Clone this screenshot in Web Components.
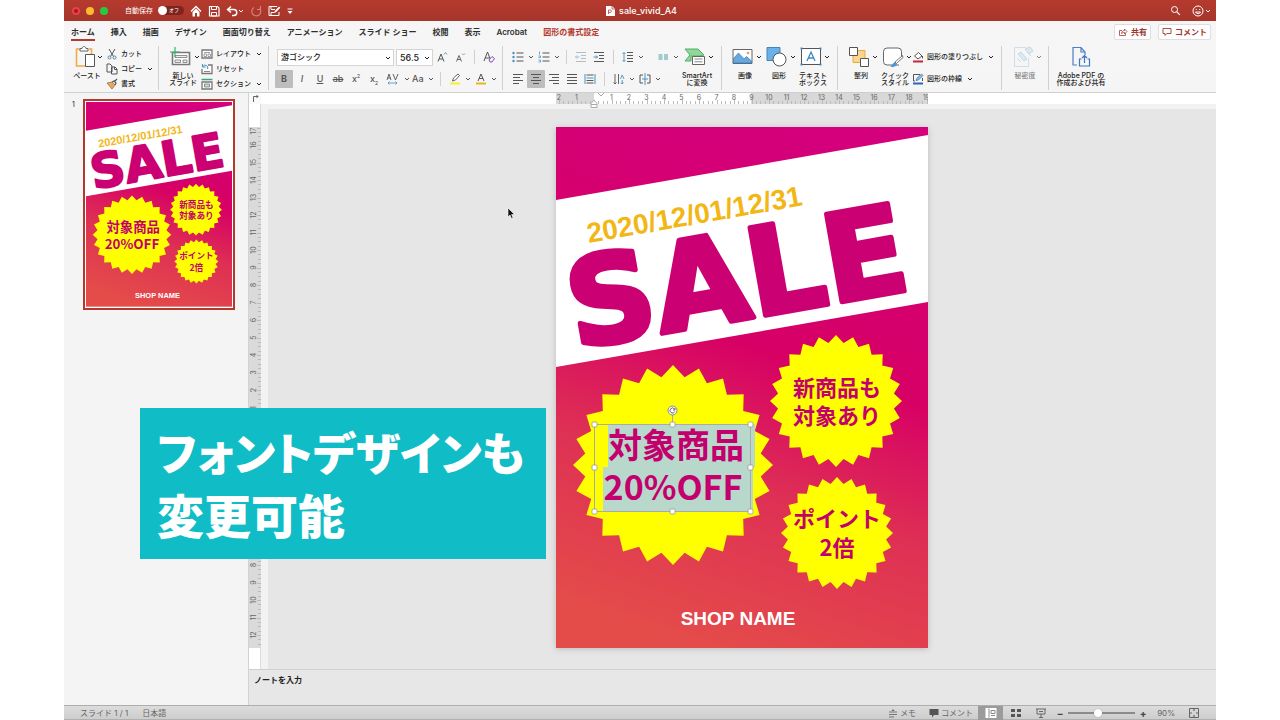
<!DOCTYPE html>
<html lang="ja">
<head>
<meta charset="utf-8">
<title>sale_vivid_A4</title>
<style>
html,body{margin:0;height:100%;background:#fff}
body{font-family:Inter,"Noto Sans CJK JP",sans-serif;font-size:7px;color:#222;overflow:hidden}
</style>
</head>
<body>
<office-window></office-window>
<script>
const RESET = `*{box-sizing:border-box}
button,select,input{font:inherit;color:inherit;margin:0;padding:0;border:0;background:none}
svg{display:block}`;
const define = (name, css, html, setup) => customElements.define(name, class extends HTMLElement {
  constructor() {
    super();
    this.attachShadow({mode: 'open'});
  }
  connectedCallback() {
    const body = typeof html === 'function' ? html(this) : html;
    this.shadowRoot.innerHTML = `<style>${RESET}${css}</style>${body}`;
    if (setup) setup(this, this.shadowRoot);
  }
});

/* ---------- icons: [width, height, markup] ---------- */
const lines = (rows, c = '#555') => rows.map(([x, y, w]) => `<path d="M${x} ${y}h${w}" stroke="${c}"/>`).join('');
const ICONS = {
  home: [12,12,'<path d="M1 6.5 6 1.5l5 5" fill="none" stroke="#fff" stroke-width="1.4"/><path d="M2.500 7 6 3.600 9.500 7v4.500H7V8H5v3.500H2.500z" fill="#fff"/>'],
  save: [12,12,'<path d="M1.500 1.500h8l1.500 1.500v8h-9.500z" fill="none" stroke="#fff" stroke-width="1.200"/><path d="M3.500 1.500h5v3h-5zM3.500 7.500h5v3.500h-5z" fill="none" stroke="#fff"/>'],
  undo: [12,12,'<path d="M5 1.500 1.500 4.500 5 7.500M1.500 4.500h6a3 3 0 0 1 .5 6H6" fill="none" stroke="#fff" stroke-width="1.400"/>'],
  redo: [12,12,'<path d="M9.800 3.500A4.500 4.500 0 1 1 4 2.500M7 4.500h3.500V1" fill="none" stroke="#d8837b" stroke-width="1.100"/>'],
  edit: [13,12,'<path d="M11 7v3.500H1v-9h8M3 1.500v3h4M3 10.500v-3h3" fill="none" stroke="#fff"/><path d="m6 8 .7-2L11 1.500l1.300 1.300L8 7.300z" fill="#fff"/>'],
  more: [6,8,'<path d="M.5 2h5" stroke="#fff"/><path d="M.5 4h5L3 7z" fill="#fff"/>'],
  file: [9,10,'<path d="M0 0h6l3 3v7H0z" fill="#fff"/><path d="M6 0v3h3M2.500 8V4h1.700a1.200 1.200 0 0 1 0 2.500H2.500" fill="none" stroke="#c0685f"/>'],
  search: [11,11,'<circle cx="4.500" cy="4.500" r="3" fill="none" stroke="#fff"/><path d="m6.800 6.800 3 3" stroke="#fff" stroke-width="1.200"/>'],
  smile: [12,12,'<circle cx="6" cy="6" r="5" fill="none" stroke="#fff"/><path d="M4.300 4v1M7.700 4v1M3.500 7a2.700 2.700 0 0 0 5 0z" fill="none" stroke="#fff"/>'],
  share: [10,10,'<path d="M4 3.500H1.500v5h6V6.500M3.500 6.500c.3-2 1.500-3 3-3V2l2.500 2.500L6.500 7V5.500c-1.500 0-2.300.3-3 1z" fill="none" stroke="#a33b32" stroke-width=".8"/>'],
  bubble: [10,10,'<path d="M1 1.500h8v5H4.800L3 8.500v-2H1z" fill="none" stroke="#a33b32" stroke-width=".9"/>'],
  paste: [20,22,'<path d="M5 3H1.500v17H10M14 3h2.500v5" fill="none" stroke="#f0ac45" stroke-width="1.600"/><path d="M5 5V2.500h2C7.300 1 8 .6 9 .6s1.700.4 2 1.900h2V5z" fill="#fff" stroke="#666"/><path d="M10.500 8.500h9v12h-9z" fill="#fff" stroke="#555"/>'],
  cut: [12,12,'<path d="m3 1 4.500 7.500M9 1 4.500 8.500" stroke="#555"/><circle cx="3.500" cy="9.500" r="1.500" fill="none" stroke="#58a"/><circle cx="8.500" cy="9.500" r="1.500" fill="none" stroke="#58a"/>'],
  copy: [12,12,'<path d="M1 1h3l2 2v6H1zM5.500 4h3.500l2 2v5h-5.500z" fill="#f7f7f7" stroke="#555"/><path d="M8.500 4v2.500H11" fill="none" stroke="#555"/>'],
  brush: [12,12,'<path d="m1 5 5-1 3 3-3 4z" fill="#f2a654" stroke="#8a6a4a" stroke-width=".7"/><path d="m6 4 2-1 2 2-1 2M8.500 3.500 11 1" fill="none" stroke="#555" stroke-width="1.200"/>'],
  newslide: [22,20,'<path d="M2.500 5.500h17v12h-17z" fill="#fff" stroke="#777" stroke-width="1.600"/><path d="M5 8.500h12v2H5zM5 13h5.500v2.500H5zM13 13h4v2.500h-4z" fill="#eee" stroke="#777" stroke-width=".8"/><path d="M5 0v10M0 5h10" stroke="#35b46a" stroke-width="1.200"/>'],
  layout: [12,12,'<path d="M1 2h10v8H1z" fill="#fff" stroke="#777" stroke-width="1.300"/><path d="M3 4.500h6M3 8.500V6h2.500v2.500zM7 8.500V6h2.500v2.500z" fill="none" stroke="#888" stroke-width=".8"/>'],
  reset: [12,12,'<path d="M1 2h10v8.500H1z" fill="#fff" stroke="#777" stroke-width="1.300"/><path d="M3 8.500h6" stroke="#888"/><path d="M0 1h7v5H0z" fill="#f4f4f4"/><path d="M6.500 6A2.500 2.500 0 0 0 2 3.500M1.500 1v3h3" fill="none" stroke="#4a92bf"/>'],
  section: [12,12,'<path d="M.5 1.500h11" stroke="#3aa873" stroke-width="1.500"/><path d="M1 4h10v7H1z" fill="#fff" stroke="#777" stroke-width="1.300"/><path d="M3.500 6h5v3h-5z" fill="#bde3cf" stroke="#777" stroke-width=".8"/>'],
  grow: [12,12,'<path d="M2 10.500 5 3l3 7.500M3 8h4" fill="none" stroke="#555"/><path d="m8 3.500 1.500-2 1.500 2" fill="none" stroke="#4a92bf" stroke-width=".8"/>'],
  shrink: [12,12,'<path d="M2.500 10.500 5 4.500l2.500 6M3.300 8.500h3.400" fill="none" stroke="#555" stroke-width=".9"/><path d="M8 2.500 9.500 4 11 2.500" fill="none" stroke="#4a92bf" stroke-width=".8"/>'],
  clear: [12,12,'<path d="M1 10 4.500 1 8 10M2.300 7h4" fill="none" stroke="#555"/><path d="m6 9 3-3.500 2.500 2L9 11H7z" fill="#f4eefa" stroke="#8f4fb5"/>'],
  spacing: [14,12,'<path d="m1 7 2-6 2 6M1.700 5h2.700M7 1l2.500 6L12 1" fill="none" stroke="#555" stroke-width=".9"/><path d="M2 10h9M3.500 8.500 2 10l1.500 1.500M9.500 8.500 11 10l-1.500 1.500" fill="none" stroke="#4a92bf" stroke-width=".8"/>'],
  marker: [12,12,'<path d="M1 9.500h10v2H1z" fill="#f8ee2c"/><path d="m3.500 8 1-3L9 1l1.500 1.500L6.500 7z" fill="#fff" stroke="#555" stroke-width=".9"/>'],
  fontcolor: [12,12,'<path d="M1 9.500h10v2H1z" fill="#f0b323"/><path d="m3 8 3-7 3 7M4 5.500h4" fill="none" stroke="#555"/>'],
  bullets: [12,12,'<g fill="#4a92bf"><circle cx="1.500" cy="2" r="1.200"/><circle cx="1.500" cy="6" r="1.200"/><circle cx="1.500" cy="10" r="1.200"/></g>'+lines([[4.5,2,7],[4.5,6,7],[4.5,10,7]])],
  numbers: [12,12,'<path d="M1.500.5v3M.5 5h2v1.500h-2M.5 9h2v2h-2" fill="none" stroke="#4a92bf" stroke-width=".8"/>'+lines([[4.5,2,7],[4.5,6,7],[4.5,10,7]])],
  outdent: [12,12,lines([[1,1.5,10],[6,4.5,5],[6,7.5,5],[1,10.500,10]],'#b5bcc4')+'<path d="M4.500 6h-4M2 4.500.5 6 2 7.500" fill="none" stroke="#9cc0dd"/>'],
  indent: [12,12,lines([[1,1.5,10],[6,4.5,5],[6,7.5,5],[1,10.500,10]])+'<path d="M.5 6h4M3 4.500 4.500 6 3 7.500" fill="none" stroke="#4a92bf"/>'],
  linesp: [12,12,lines([[5,1.5,6],[5,4.5,6],[5,7.5,6],[5,10.500,6]])+'<path d="M2 1.500v9M.5 3 2 1.500 3.500 3M.5 9 2 10.500 3.500 9" fill="none" stroke="#4a92bf" stroke-width=".9"/>'],
  columns: [12,12,lines([[1.5,4,4],[1.5,6,4],[1.5,8,4],[7,4,4],[7,6,4],[7,8,4]],'#4fa0a8')],
  left: [12,12,lines([[1,1.5,10],[1,4.500,7],[1,7.5,10],[1,10.500,6]])],
  center: [12,12,lines([[1,1.500,10],[3,4.500,6],[1,7.500,10],[3,10.500,6]])],
  right: [12,12,lines([[1,1.500,10],[4,4.500,7],[1,7.500,10],[5,10.500,6]])],
  justify: [12,12,lines([[1,1.500,10],[1,4.500,10],[1,7.500,10],[1,10.500,10]])],
  distribute: [12,12,'<path d="M1 1v10M11 1v10" stroke="#4a92bf"/>'+lines([[2.500,2,7],[2.500,10,7],[2.500,7.500,7]])+'<path d="M2.500 5h7" stroke="#4a92bf"/>'],
  textdir: [12,12,'<path d="M2 1v10M.5 9.500 2 11l1.500-1.500M5.500 1v10" fill="none" stroke="#555" stroke-width=".9"/><path d="m7.500 6 1.700-4L11 6M9.200 7v4M8 9.500 9.200 11l1.300-1.500" fill="none" stroke="#4a92bf" stroke-width=".9"/>'],
  aligntext: [12,12,'<path d="M4 2H1v8h3M8 2h3v8H8" fill="none" stroke="#555"/><path d="M6 0v12M3 6h6" stroke="#4a92bf"/>'],
  smartart: [22,20,'<path d="M1 2h13l6 6-4 1H7v5H1l5-6z" fill="#8fd79b" stroke="#55ad6a"/><path d="M8.500 9.500h12v8h-12z" fill="#fff" stroke="#666"/><path d="M10.500 12h8M10.500 14.800h8" stroke="#888"/>'],
  picture: [22,20,'<path d="M1 2.500h19v14H1z" fill="#fff" stroke="#666"/><path d="m1.500 11.500 5-5.500 5.500 6 2.500-2.500 5 4.500v2h-18z" fill="#64a9e0" stroke="#3677b0" stroke-width=".7"/><circle cx="16" cy="6" r="1.300" fill="#ea9a6a"/>'],
  shapes: [22,20,'<path d="M1 .5h13v13H1z" fill="#6bb0e6" stroke="#4285bb"/><circle cx="13.500" cy="12.500" r="6.500" fill="#fff" stroke="#555"/>'],
  textbox: [22,20,'<path d="M1.500 1.500h19v16h-19z" fill="#fff" stroke="#555"/><path d="m7 14 4-9 4 9M8.500 11h5" fill="none" stroke="#3a8bc4" stroke-width="1.300"/><path d="M.5.5h2v2h-2zM19.500.5h2v2h-2zM.5 16.500h2v2h-2zM19.500 16.500h2v2h-2z" fill="#3a8bc4"/>'],
  arrange: [22,20,'<path d="M5 3.500h12v12H5z" fill="#fcd68c" stroke="#e3aa4c"/><path d="M1.500.5h8v8h-8zM12.500 11.500h8v8h-8z" fill="#fff" stroke="#555"/>'],
  quick: [22,20,'<path d="M17 18H5a3.500 3.500 0 0 1-3.500-3.500v-10A3.500 3.500 0 0 1 5 1h11a3.500 3.500 0 0 1 3.500 3.500V10" fill="#fff" stroke="#666"/><path d="M20.500 8.500 13 15l1.500 1.500 6.500-6z" fill="#fff" stroke="#555" stroke-width=".8"/><path d="M8 20c2-.5 2-4 5-5l2 1.500c0 2-2 4-7 3.500z" fill="#4a97d8"/>'],
  fill: [12,12,'<path d="m2.500 5 4-3.500L10 5 6 8z" fill="#fff" stroke="#555"/><path d="M1 9.500h10v2H1z" fill="#c4283c"/><path d="M10.500 5v2.500" stroke="#555"/>'],
  outline: [12,12,'<path d="M8 1.500H1.500V8H3M10.500 5v3" fill="none" stroke="#555"/><path d="m4 7.500 1-2.500L9.500 1 11 2.500 6.500 7z" fill="#8bbce8" stroke="#3c6ea8" stroke-width=".7"/><path d="M1 9.500h10v2H1z" fill="#3463b5"/>'],
  secret: [22,22,'<path d="M14 1.500H2.500v19h14V12" fill="none" stroke="#a9cfe0"/><path d="m6 8 3-2 6 7-3 2zM13 3l5-2 3 4-4 3z" fill="#c5dfec" stroke="#8cb9d0" stroke-width=".8"/><path d="m5 12 4 4M15 6l4 4" stroke="#9cc5d8"/>'],
  pdf: [20,22,'<path d="M6 19H2V1.500h8L14 6v3M10 1.500V6h4" fill="none" stroke="#4a7fc8" stroke-width="1.200"/><path d="M10.500 13h-2v7h10v-7h-2M13.500 17V9.500M11 12l2.500-2.500L16 12" fill="none" stroke="#3f77c4" stroke-width="1.200"/>'],
  memo: [10,10,'<path d="M3.500 3 5 1l1.500 2z" fill="#666"/><path d="M1 4h8M1 6.500h8M1 9h5" stroke="#777"/>'],
  bubblefill: [10,10,'<path d="M.5 1h9v6H5L3 9.500V7H.5z" fill="#555"/>'],
  normal: [12,12,'<path d="M.5 1h11v10H.5z" fill="#fff"/><path d="M4 1.500v9M6 3.500h4v3H6zM6 8.500h4" fill="none" stroke="#888"/>'],
  sorter: [12,12,'<path d="M1 2h4v3H1zM7 2h4v3H7zM1 7h4v3H1zM7 7h4v3H7z" fill="#555"/>'],
  show: [12,12,'<path d="M1 2h10M2 2v5h8V2M6 7v3M4 10.500h4M4 4.500h4" fill="none" stroke="#666"/>'],
  fit: [12,12,'<path d="M1.500 1.500h9v9h-9z" fill="none" stroke="#666"/><path d="M6 1v3M6 8v3M1 6h3M8 6h3" stroke="#666" stroke-width="1.200"/>'],
  tabstop: [7,8,'<path d="M1.500 8V2.500H6M4.500 1 6 2.500 4.500 4" fill="none" stroke="#555" stroke-width=".9"/>'],
  chev: [6,6,'<path d="m1 2 2 2 2-2" fill="none" stroke="currentColor"/>'],
};
define('app-icon', ':host{display:block;flex:none}', el => {
  const [w, h, m] = ICONS[el.getAttribute('name')];
  return `<svg width="${w}" height="${h}" viewBox="0 0 ${w} ${h}" aria-hidden="true">${m}</svg>`;
});

/* ---------- small reusable controls ---------- */
define('icon-button', `:host{display:flex;flex:none}
button{display:flex;align-items:center;width:18px;height:18px;justify-content:center;font-size:9px;line-height:18px;color:#555}
:host([menu]) button{width:26px;justify-content:flex-start;gap:4px;padding-left:3px}
:host([on]) button{background:#bdbdbd;border-radius:1px}`,
  el => `<button aria-label="${el.title}"><slot></slot>${el.hasAttribute('menu') ? '<app-icon name="chev"></app-icon>' : ''}</button>`);
define('big-button', `:host{display:block;flex:none}
button{display:grid;justify-items:center;align-content:start;grid-template-rows:24px auto;width:var(--w,34px);line-height:7px;white-space:nowrap}
.top{display:flex;align-items:center;gap:2px;height:22px}
.top.menu{margin-left:4px}
.label{padding-top:2px}`,
  el => `<button><span class="top ${el.hasAttribute('menu') ? 'menu' : ''}"><app-icon name="${el.getAttribute('icon')}"></app-icon>${el.hasAttribute('menu') ? '<app-icon name="chev"></app-icon>' : ''}</span><span class="label"><slot></slot></span></button>`);
define('small-button', `:host{display:block}
button{display:flex;align-items:center;gap:3px;height:12px;line-height:12px;white-space:nowrap}
app-icon:last-child{margin-left:2px}`,
  el => `<button><app-icon name="${el.getAttribute('icon')}"></app-icon><span><slot></slot></span>${el.hasAttribute('menu') ? '<app-icon name="chev"></app-icon>' : ''}</button>`);
define('ribbon-group', `:host{display:flex;flex:none;height:44px;border-right:1px solid #d0d0d0;padding-left:6px}
:host(:last-of-type){border:0}`, '<slot></slot>');
define('drop-list', `:host{display:flex;position:relative;height:17px;background:#fff;border:1px solid #d4d4d4}
select{appearance:none;width:100%;padding:0 3px;line-height:15px;border-radius:0}
app-icon{position:absolute;right:2px;top:5px;pointer-events:none}`,
  el => `<select aria-label="${el.title}"><option>${el.getAttribute('value')}</option></select><app-icon name="chev"></app-icon>`);

/* ---------- title bar ---------- */
define('title-bar', `:host{display:grid;grid-template-columns:1fr auto 1fr;align-items:center;height:21px;background:linear-gradient(#b63a2e,#a5352b);color:#fff;padding:0 5px 0 8px}
.left,.right,.title{display:flex;align-items:center}
.dots{display:flex;gap:6px;margin-right:17px}
.dots i{width:8px;height:8px;border-radius:50%;background:#fdbb2e}
.dots i:first-child{background:#a01820;border:2px solid #ec3f4a}
.dots i:last-child{background:#27c93f}
label{display:flex;align-items:center;gap:5px;line-height:12px}
.switch{position:relative;width:26px;height:9px;border-radius:5px;background:#7d241d;font-size:5px;line-height:9px;padding-left:11px;white-space:nowrap}
.switch input{appearance:none;position:absolute;left:0;top:0;width:9px;height:9px;border-radius:50%;background:#fff}
.tools{display:flex;align-items:center;gap:6px;margin-left:6px}
.tools button{display:flex;align-items:center}
.title{gap:4px;font-size:9px;line-height:12px;font-weight:500;margin:0}
.right{justify-content:flex-end;gap:11px}
.right button{display:flex;align-items:center;gap:1px}`,
`<div class="left"><span class="dots"><i></i><i></i><i></i></span>
<label>自動保存<span class="switch"><input type="checkbox" aria-label="自動保存">オフ</span></label>
<div class="tools"><button aria-label="ホーム"><app-icon name="home"></app-icon></button><button aria-label="保存"><app-icon name="save"></app-icon></button><button aria-label="元に戻す"><app-icon name="undo"></app-icon><app-icon name="chev"></app-icon></button><button aria-label="やり直し"><app-icon name="redo"></app-icon></button><button aria-label="編集"><app-icon name="edit"></app-icon></button><button aria-label="その他"><app-icon name="more"></app-icon></button></div></div>
<h1 class="title"><app-icon name="file"></app-icon>sale_vivid_A4</h1>
<div class="right"><button aria-label="検索"><app-icon name="search"></app-icon></button><button aria-label="フィードバック"><app-icon name="smile"></app-icon><app-icon name="chev"></app-icon></button></div>`);

/* ---------- tabs ---------- */
define('tab-strip', `:host{display:flex;align-items:center;justify-content:space-between;height:22px;padding:0 5px 0 7px;font-size:8px;line-height:12px;font-weight:600}
nav{display:flex;gap:16px}
a{color:#2e2e2e;text-decoration:none;padding:2px 0 1px;border-bottom:2px solid transparent;white-space:nowrap}
a.on{border-color:#b23a2e}a.fmt{color:#b5392f}
.actions{display:flex;gap:7px}
button{display:flex;align-items:center;gap:3px;height:16px;padding:0 3px;background:#fff;border:1px solid #dedede;border-radius:2px;color:#a0352b;white-space:nowrap}`,
`<nav><a class="on" href="#">ホーム</a><a href="#">挿入</a><a href="#">描画</a><a href="#">デザイン</a><a href="#">画面切り替え</a><a href="#">アニメーション</a><a href="#">スライド ショー</a><a href="#">校閲</a><a href="#">表示</a><a href="#">Acrobat</a><a class="fmt" href="#">図形の書式設定</a></nav>
<div class="actions"><button><app-icon name="share"></app-icon>共有</button><button><app-icon name="bubble"></app-icon>コメント</button></div>`);

/* ---------- ribbon ---------- */
const ib = (icon, title, attrs = '') => `<icon-button title="${title}" ${attrs}><app-icon name="${icon}"></app-icon></icon-button>`;
define('ribbon-bar', `:host{display:flex;height:50px;padding-top:3px;border-bottom:1px solid #cfcfcf;font-weight:500}
.col{display:grid;grid-template-rows:repeat(3,15px);align-items:center;align-content:start}
.clip .col{padding-left:2px}
.rows{display:grid;grid-template-rows:18px 18px;gap:4px;align-content:start;padding-top:2px}
.row{display:flex;align-items:center}
.sep{width:1px;height:14px;background:#d0d0d0;margin:0 5px}
.space{width:9px}
.clip{width:95px}.slides{width:110px}.font{width:234px}.para{width:219px}.insert{width:116px}.style{width:164px}.secret{width:47px}
.slides big-button{--w:36px}
.font{font-size:8px}.font drop-list:first-child{width:117px;margin:0 2px}.font drop-list:nth-child(2){width:37px;font-size:9px}
.two{display:grid;grid-template-rows:18px 18px;gap:4px;padding-top:2px;align-items:center}
.faded{opacity:.55}
.adobe big-button{--w:52px}
b,i,u,s{font-size:9px}sup,sub{font-size:5px;line-height:0}`,
`<ribbon-group class="clip"><big-button icon="paste" menu>ペースト</big-button><div class="col"><small-button icon="cut">カット</small-button><small-button icon="copy" menu>コピー</small-button><small-button icon="brush">書式</small-button></div></ribbon-group>
<ribbon-group class="slides"><big-button icon="newslide" menu>新しい<br>スライド</big-button><div class="col"><small-button icon="layout" menu>レイアウト</small-button><small-button icon="reset">リセット</small-button><small-button icon="section" menu>セクション</small-button></div></ribbon-group>
<ribbon-group class="font"><div class="rows">
<div class="row"><drop-list title="フォント" value="游ゴシック"></drop-list><drop-list title="サイズ" value="56.5"></drop-list>${ib('grow','拡大')}${ib('shrink','縮小')}<span class="sep"></span>${ib('clear','書式のクリア')}</div>
<div class="row"><icon-button title="太字" on><b>B</b></icon-button><icon-button title="斜体"><i>I</i></icon-button><icon-button title="下線"><u>U</u></icon-button><icon-button title="取り消し線"><s>ab</s></icon-button><icon-button title="上付き"><span>x<sup>2</sup></span></icon-button><icon-button title="下付き"><span>x<sub>2</sub></span></icon-button>${ib('spacing','文字の間隔','menu')}<icon-button title="大文字/小文字" menu>Aa</icon-button><span class="sep"></span>${ib('marker','蛍光ペン','menu')}${ib('fontcolor','フォントの色','menu')}</div></div></ribbon-group>
<ribbon-group class="para"><div class="rows">
<div class="row">${ib('bullets','箇条書き','menu')}${ib('numbers','段落番号','menu')}<span class="sep"></span>${ib('outdent','インデント解除')}${ib('indent','インデント')}<span class="sep"></span>${ib('linesp','行間','menu')}<span class="space"></span>${ib('columns','段組み','menu')}</div>
<div class="row">${ib('left','左揃え')}${ib('center','中央揃え','on')}${ib('right','右揃え')}${ib('justify','両端揃え')}${ib('distribute','均等割り付け')}<span class="sep"></span>${ib('textdir','文字列の方向','menu')}${ib('aligntext','文字の配置','menu')}</div></div><big-button icon="smartart" menu>SmartArt<br>に変換</big-button></ribbon-group>
<ribbon-group class="insert"><big-button icon="picture" menu>画像</big-button><big-button icon="shapes" menu>図形</big-button><big-button icon="textbox" menu>テキスト<br>ボックス</big-button></ribbon-group>
<ribbon-group class="style"><big-button icon="arrange" menu>整列</big-button><big-button icon="quick" menu>クイック<br>スタイル</big-button><div class="two"><small-button icon="fill" menu>図形の塗りつぶし</small-button><small-button icon="outline" menu>図形の枠線</small-button></div></ribbon-group>
<ribbon-group class="secret"><big-button class="faded" icon="secret" menu>秘密度</big-button></ribbon-group>
<ribbon-group class="adobe"><big-button icon="pdf">Adobe PDF の<br>作成および共有</big-button></ribbon-group>`);

/* ---------- the flyer ---------- */
const burst = (cx, cy, r, n = 24, k = .885) => {
  const p = [];
  for (let i = 0; i < n * 2; i++) {
    const a = Math.PI * i / n, q = i % 2 ? r * k : r;
    p.push((cx + q * Math.sin(a)).toFixed(1) + ',' + (cy - q * Math.cos(a)).toFixed(1));
  }
  return `<polygon points="${p.join(' ')}" fill="#ff0"/>`;
};
const handle = (x, y) => `<rect x="${x - 2}" y="${y - 2}" width="5" height="5" rx="1" fill="#fff" stroke="#999" stroke-width=".8"/>`;
define('sale-flyer', ':host{display:block}svg{width:100%;height:auto}text{text-anchor:middle}', el => {
  const sel = el.hasAttribute('editing');
  return `<svg viewBox="0 0 372 521" role="img" aria-label="SALE">
<defs><linearGradient id="bg" x1=".62" y1="0" x2=".38" y2="1"><stop offset="0" stop-color="#d4007c"/><stop offset=".42" stop-color="#d70065"/><stop offset=".68" stop-color="#de3054"/><stop offset="1" stop-color="#e44c49"/></linearGradient></defs>
<rect width="372" height="521" fill="url(#bg)"/>
<path d="M0 73 372 8v167L0 240z" fill="#fff"/>
<g font-family="Liberation Sans" font-weight="700">
<text transform="translate(140 97) rotate(-10)" font-size="28" fill="#f2b714">2020/12/01/12/31</text>
<text transform="translate(188 192) rotate(-10)" font-family="DejaVu Sans" font-size="122" fill="#cb0073" stroke="#cb0073" stroke-width="5" stroke-linejoin="round">SALE</text>
<text x="182" y="498" font-size="19" fill="#fff">SHOP NAME</text></g>
${burst(117, 338, 100)}${burst(280, 274, 66)}${burst(281, 406, 56)}
${sel ? '<path d="M52 297h147v43h-2v44H47v-44h5z" fill="#b9d8cc"/>' : ''}
<g font-family="Noto Sans CJK JP" font-weight="700" fill="#c3006e">
<text x="120" y="331" font-size="34">対象商品</text><text x="117" y="373" font-size="34">20%OFF</text>
<g font-size="22"><text x="281" y="269">新商品も</text><text x="281" y="297">対象あり</text><text x="281" y="400">ポイント</text><text x="281" y="429">2倍</text></g></g>
${sel ? `<path d="M38.500 297.500h156v87h-156zM116.500 297.500V288" fill="none" stroke="#aaa"/><circle cx="116.500" cy="283.500" r="4.500" fill="#fff" stroke="#888"/><path d="M118.500 282a2.500 2.500 0 1 0 .3 2.500M119 281v2h-2" fill="none" stroke="#555" stroke-width=".9"/>
${[[38,297],[116,297],[194,297],[38,340],[194,340],[38,384],[116,384],[194,384]].map(p => handle(...p)).join('')}` : ''}
</svg>`;
});

/* ---------- rulers ---------- */
define('ruler-scale', ':host{display:block;min-width:0;min-height:0}svg{width:100%;height:100%}text{font:7px Inter,sans-serif;fill:#666;text-anchor:middle}', el => {
  const vert = el.hasAttribute('vertical'), len = vert ? 522 : 372, zero = vert ? 298 : 38, unit = 35 / 2;
  let m = '';
  for (let i = -17; i < 20; i++) {
    const at = zero + i * unit;
    for (const q of [0, .25, .5, .75]) {
      const t = Math.round(at + q * unit);
      if (t > 0 && t < len) m += vert ? `<path d="M${q ? 9 : 8} ${t}.5H12" stroke="#bbb"/>` : `<path d="M${t}.5 ${q ? 8 : 7}V11" stroke="#bbb"/>`;
    }
    if (i && at > 0 && at < len - 1) m += vert ? `<text transform="translate(7 ${Math.max(at, 4)}) rotate(-90)">${Math.abs(i)}</text>` : `<text x="${at}" y="7">${Math.abs(i)}</text>`;
  }
  return vert
    ? `<svg viewBox="0 0 12 522" preserveAspectRatio="xMidYMin slice"><path d="M0 0h12v522H0z" fill="#dadada"/>${m}</svg>`
    : `<svg viewBox="0 0 372 11" preserveAspectRatio="xMinYMid slice"><path d="M0 0h372v11H0z" fill="#d8d8d8"/><path d="M38 0h157v11H38z" fill="#fff"/>${m}</svg>`;
});

/* ---------- workspace ---------- */
define('slide-list', `:host{display:flex;background:#f4f4f4;border-right:1px solid #d2d2d2;padding:6px 13px 0 8px;gap:8px;line-height:12px}
button{display:block;flex:1;align-self:flex-start;border:2px solid #b5382c;background:#fff;padding:1px}`,
'<span>1</span><button aria-label="スライド 1"><sale-flyer></sale-flyer></button>');
define('slide-canvas', `:host{--h:calc(100vh - 199px);--w:calc(var(--h) * 372 / 521);display:grid;min-width:0;background:#e6e6e6;
grid-template-columns:12px 7px 1fr var(--w) 1fr;grid-template-rows:11px 5px 18px var(--h) 1fr}
.corner{background:#fafafa;padding:1px 3px;grid-area:1/1}
.hbar{grid-area:1/2/2/6;background:#fff}
.gap{grid-area:2/2/3/6;background:#f2f2f2}.gapv{grid-area:2/2/6/3;background:#f2f2f2}
.h{grid-area:1/4;position:relative}.v{grid-area:4/1}.vbar{grid-area:2/1/6/2;background:#fff;border-right:1px solid #ddd}
.mark{position:absolute;left:33px;top:0}
sale-flyer{grid-area:4/4;box-shadow:0 1px 6px #bbb}`,
`<div class="hbar"></div><div class="corner"><app-icon name="tabstop"></app-icon></div><div class="gap"></div><div class="gapv"></div><div class="vbar"></div>
<div class="h"><ruler-scale></ruler-scale><svg class="mark" width="18" height="16"><path d="M2 10.500 5 7l3 3.500v4H2zM2 11.500h6M9 0l3 3 3-3" fill="#fff" stroke="#aaa"/></svg></div><ruler-scale class="v" vertical></ruler-scale><sale-flyer editing></sale-flyer>`);
define('status-bar', `:host{display:flex;align-items:center;height:15px;padding:0 16px;background:linear-gradient(#dcdcdc,#cdcdcd);border-top:1px solid #adadad;border-bottom:1px solid #b0b0b0;color:#666;font-size:8px;line-height:12px}
span{margin-right:14px}.right{display:flex;align-items:center;margin-left:auto}
button{display:flex;align-items:center;justify-content:center;height:14px;gap:2px}
.t{margin-right:13px}.c{margin-right:5px}.v{width:25px}.v.on{background:#9b9b9b}
input{appearance:none;width:67px;height:12px;margin:0 4px}
input::-webkit-slider-runnable-track{height:2px;background:#8b8b8b}
input::-webkit-slider-thumb{appearance:none;width:8px;height:8px;margin-top:-3px;border-radius:50%;background:#fff;box-shadow:0 0 1px #777}
.z{width:8px;font-weight:700;font-size:10px;color:#444}.z.out{margin-left:3px}output{margin:0 13px 0 10px}`,
`<span>スライド 1 / 1</span><span>日本語</span><div class="right"><button class="t"><app-icon name="memo"></app-icon>メモ</button><button class="c"><app-icon name="bubblefill"></app-icon>コメント</button><button class="v on" aria-label="標準"><app-icon name="normal"></app-icon></button><button class="v" aria-label="一覧"><app-icon name="sorter"></app-icon></button><button class="v" aria-label="スライドショー"><app-icon name="show"></app-icon></button><button class="z out" aria-label="縮小">−</button><input type="range" min="0" max="100" value="44" aria-label="ズーム"><button class="z" aria-label="拡大">+</button><output>90%</output><button aria-label="合わせる"><app-icon name="fit"></app-icon></button></div>`);
define('caption-banner', `:host{display:block;padding:13px 20px 14px 17px;background:#10bcc5;color:#fff;font:900 47px/62px "Noto Sans CJK JP",sans-serif;font-feature-settings:"palt";white-space:nowrap}
.kana{display:block;height:62px;font-size:45px}`, '<span class="kana"><slot name="kana"></slot></span><slot></slot>');

define('office-window', `:host{display:grid;position:relative;height:100vh;margin:0 5%;grid-template-columns:185px 1fr;grid-template-rows:auto minmax(0,1fr) 36px 15px;background:linear-gradient(#f6f6f6,#efefef)}
header,status-bar{grid-column:1/-1;min-width:0}
slide-list{grid-row:2/4}
.notes{background:#e7e7e7;border-top:1px solid #cfcfcf;padding:4px 5px;font-size:8px;line-height:12px;font-weight:600}
caption-banner{position:absolute;left:76px;top:408px;width:406px}
.cursor{position:absolute;left:443px;top:207px}`,
`<header><title-bar></title-bar><tab-strip></tab-strip><ribbon-bar></ribbon-bar></header>
<slide-list></slide-list><slide-canvas></slide-canvas><div class="notes">ノートを入力</div><status-bar></status-bar>
<caption-banner><span slot="kana">フォントデザインも</span>変更可能</caption-banner>
<svg class="cursor" width="8" height="13"><path d="M1 1v9l2-2 1.500 3.500 1.500-.7L4.600 7.500H7.500z" fill="#111" stroke="#fff" stroke-width=".6"/></svg>`);
</script>
</body>
</html>
